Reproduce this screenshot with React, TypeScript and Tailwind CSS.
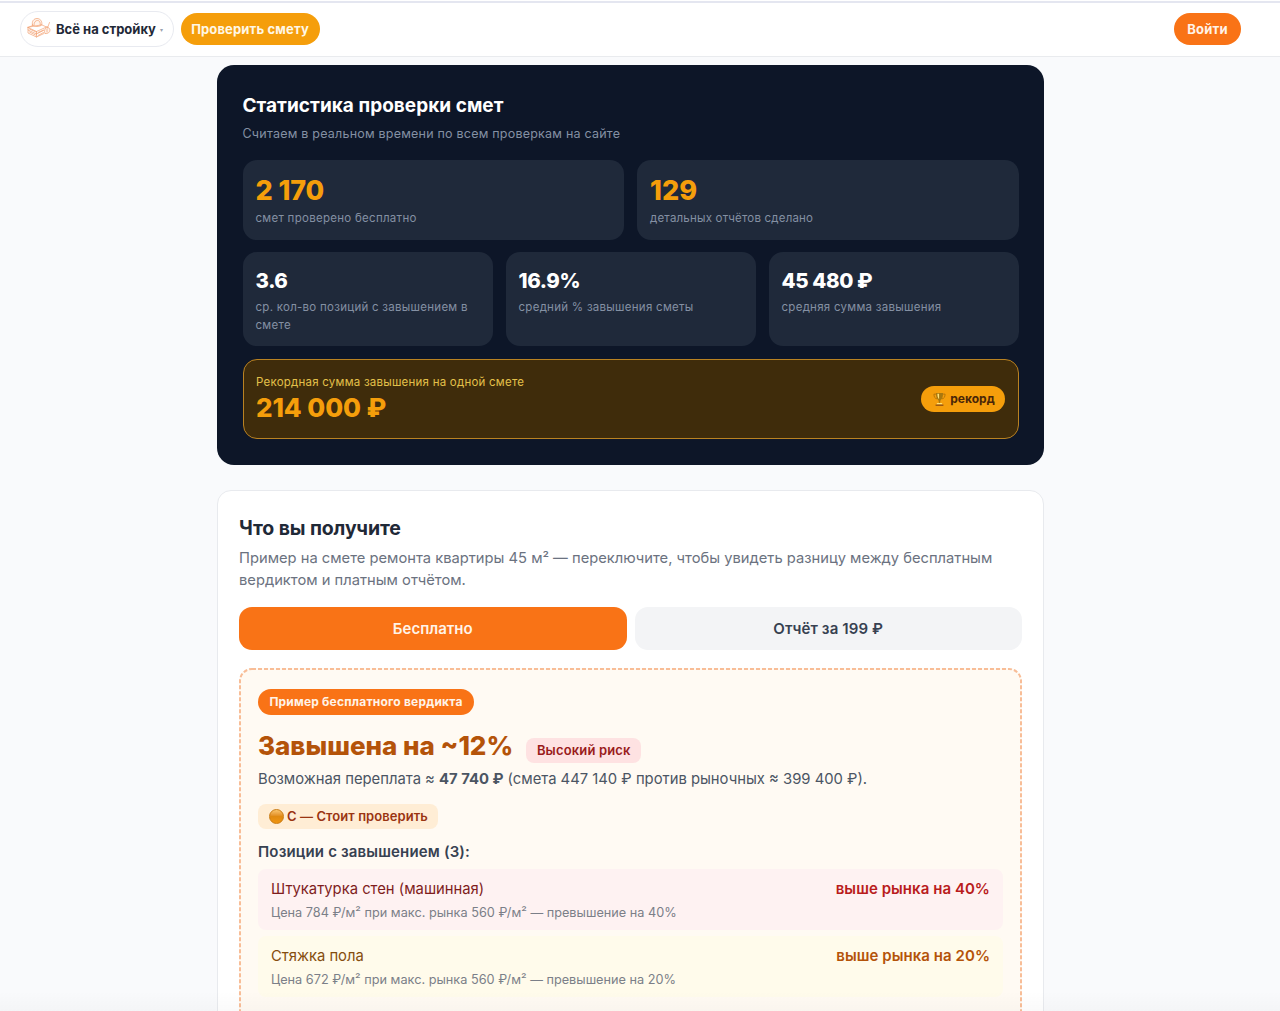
import React from "react";

type Tone = "red" | "amber";

const positions: { name: string; detail: string; excess: string; tone: Tone }[] = [
  {
    name: "Штукатурка стен (машинная)",
    detail: "Цена 784 ₽/м² при макс. рынка 560 ₽/м² — превышение на 40%",
    excess: "выше рынка на 40%",
    tone: "red",
  },
  {
    name: "Стяжка пола",
    detail: "Цена 672 ₽/м² при макс. рынка 560 ₽/м² — превышение на 20%",
    excess: "выше рынка на 20%",
    tone: "amber",
  },
];

const averages = [
  { value: "3.6", label: "ср. кол-во позиций с завышением в смете" },
  { value: "16.9%", label: "средний % завышения сметы" },
  { value: "45 480 ₽", label: "средняя сумма завышения" },
];

// hard hat on a stack of boards with a trowel leaning on the right
const LogoIcon = () => (
  <svg
    viewBox="0 0 48 40"
    className="mb-[2px] h-5 w-6 shrink-0"
    fill="none"
    stroke="#f19a69"
    strokeWidth="1.300"
    strokeLinecap="round"
    strokeLinejoin="round"
  >
    <path d="M11 14C9 6 14 1 20 1s11 5 9.500 13c-5 4-14 4-18.500 0z" fill="#fff4ec" />
    <path d="M14 14c0-6 3-9 7-9s6 3 5.500 9" />
    <path d="M2 19l9-4M30 14l9 4-20 9L2 19z" />
    <path d="M2 19v5l17 8 14-7M19 27v5M2 24v6l17 8 15-7M19 32v6" />
    <path d="M5 22l13 6M5 28l12 6M22 29l11-5M22 35l11-6" />
    <path d="M45 9l-4 11M40 18c-5 3-6 8-4 13 5 1 10-2 10-7 0-3-3-5-6-6z" fill="#fff4ec" />
    <path d="M40 22v6" />
  </svg>
);

const TrophyIcon = () => (
  <svg viewBox="0 0 14 16" className="h-[15px] w-[13px] shrink-0">
    <path
      d="M3.500 2.200H1c0 3 1 4.800 3.500 5.200M10.500 2.200H13c0 3-1 4.800-3.500 5.200"
      fill="none"
      stroke="#a66a08"
      strokeWidth="0.8"
    />
    <path d="M3.200 1h7.600c0 4.500-.8 6.500-2.600 7.600L7.500 12h-1l-.7-3.400C4 7.500 3.200 5.500 3.200 1z" fill="#a8780f" />
    <path d="M4.700 1.800h1.800v5.700C5.200 6.500 4.800 4.500 4.700 1.800z" fill="#ffe27a" />
    <path d="M4.500 11.800h5l.9 1.600H3.600z" fill="#ffe27a" />
    <path d="M2.800 13.400h8.400v1.400H2.800z" fill="#8a4b12" />
  </svg>
);

const Header = () => {
  return (
    <header className="flex h-[57px] flex-col border-b border-[#e9ebee] bg-white pt-px">
      <div className="h-[2px] bg-[#e4e6f0]" />
      <div className="flex h-[52px] items-center justify-between pl-5 pr-[39px]">
        <div className="flex items-center gap-[6.500px]">
          <div className="flex h-9 w-[154px] items-center rounded-full border border-[#e8eaf0] pl-[6px]">
            <LogoIcon />
            <span className="ml-[5px] whitespace-nowrap pt-px text-[13px] font-bold text-[#1f2937]">
              Всё на стройку
            </span>
            <span className="ml-1 text-[6px] text-gray-400">▾</span>
          </div>
          <button className="h-8 w-[139px] whitespace-nowrap rounded-full bg-[#f59e0b] pt-px text-[13px] font-bold tracking-[0.15px] text-[#fff7e6]">
            Проверить смету
          </button>
        </div>
        <button className="h-8 w-[67px] rounded-full bg-[#f97316] pt-px text-[13px] font-bold tracking-[0.2px] text-[#fff3e8]">
          Войти
        </button>
      </div>
    </header>
  );
};

const Stats = () => {
  return (
    <section className="h-[399.500px] rounded-[17px] bg-[#0d1628] px-[25.500px] pt-[26px]">
      <h2 className="text-[19px] font-bold leading-[29px] tracking-[0.03px] text-white">
        Статистика проверки смет
      </h2>
      <p className="mt-1 text-[12.500px] leading-5 tracking-[0.22px] text-[#8490a3]">
        Считаем в реальном времени по всем проверкам на сайте
      </p>

      <div className="mt-[15.500px] grid grid-cols-2 gap-[13px]">
        <div className="h-20 rounded-[14px] bg-[#1f293a] px-[13px] pt-[14px]">
          <div className="text-[27px] font-extrabold leading-[34px] tracking-[-0.1px] text-[#f59e0b]">
            2 170
          </div>
          <div className="mt-[1px] text-[11.500px] leading-[18px] tracking-[0.28px] text-[#8490a3]">
            смет проверено бесплатно
          </div>
        </div>
        <div className="h-20 rounded-[14px] bg-[#1f293a] px-[13px] pt-[14px]">
          <div className="text-[27px] font-extrabold leading-[34px] text-[#f59e0b]">129</div>
          <div className="mt-[1px] text-[11.500px] leading-[18px] tracking-[0.2px] text-[#8490a3]">
            детальных отчётов сделано
          </div>
        </div>
      </div>

      <div className="mt-[12.500px] grid grid-cols-3 gap-[13px]">
        {averages.map((item) => (
          <div key={item.value} className="h-[94px] rounded-[14px] bg-[#1f293a] px-[13px] pt-[13px]">
            <div className="text-[20.500px] font-extrabold leading-8 tracking-[-0.4px] text-white">
              {item.value}
            </div>
            <div className="mt-[0.500px] text-[11.500px] leading-[18px] tracking-[0.27px] text-[#8490a3]">
              {item.label}
            </div>
          </div>
        ))}
      </div>

      <div className="mt-[13px] flex h-20 items-center justify-between rounded-[14px] border border-[#b98222] bg-[#3f2c0b] px-[12.500px]">
        <div>
          <div className="text-[11.500px] leading-[18px] tracking-[0.23px] text-[#e3c04a]">
            Рекордная сумма завышения на одной смете
          </div>
          <div className="text-[26px] font-extrabold leading-[34px] tracking-[-0.1px] text-[#f59e0b]">
            214 000 ₽
          </div>
        </div>
        <div className="flex h-[26px] w-[84px] items-center justify-center gap-1 rounded-full bg-[#f59e0b] pl-[2px] text-xs font-bold text-[#4a2608]">
          <TrophyIcon />
          рекорд
        </div>
      </div>
    </section>
  );
};

const PositionRow = ({ name, detail, excess, tone }: (typeof positions)[number]) => {
  const red = tone === "red";
  return (
    <div className={`h-[61px] rounded-lg px-[13px] pt-2 ${red ? "bg-[#fef2f2]" : "bg-[#fffbeb]"}`}>
      <div className="flex items-center justify-between leading-6">
        <span className={`text-[14.800px] ${red ? "text-[#7f1d1d]" : "text-[#854d0e]"}`}>{name}</span>
        <span
          className={`text-[15px] font-semibold tracking-[0.05px] ${red ? "text-[#b91c1c]" : "text-[#b45309]"}`}
        >
          {excess}
        </span>
      </div>
      <div className="mt-[2px] text-[12.730px] leading-5 text-[#7b7f88]">{detail}</div>
    </div>
  );
};

const Offer = () => {
  return (
    <section className="mt-[25.500px] h-[560px] rounded-[14px] border border-[#e8eaee] bg-white px-[21px] pt-[22px]">
      <h2 className="text-[19.500px] font-bold leading-[30px] tracking-[-0.12px] text-[#1f2937]">
        Что вы получите
      </h2>
      <p className="mt-[5px] text-[14.720px] leading-[21.500px] text-[#6b7280]">
        Пример на смете ремонта квартиры 45 м² — переключите, чтобы увидеть разницу между бесплатным
        вердиктом и платным отчётом.
      </p>

      <div className="mt-4 grid grid-cols-2 gap-2">
        <button className="h-[43px] rounded-[13px] bg-[#f97316] pt-px text-[15px] font-semibold text-[#fff3e8]">
          Бесплатно
        </button>
        <button className="h-[43px] rounded-[13px] bg-[#f3f4f6] pt-px text-[15px] font-semibold tracking-[0.12px] text-[#374151]">
          Отчёт за 199 ₽
        </button>
      </div>

      <div className="relative mt-[18px] h-[400px] rounded-[13px] bg-[#fffaf3] px-[19px] pt-[21px]">
        {/* short dashes, finer than the native dashed border */}
        <svg className="pointer-events-none absolute inset-0 h-full w-full">
          <rect
            x="1"
            y="1"
            width="781"
            height="398"
            rx="12"
            fill="none"
            stroke="#f8bd97"
            strokeWidth="2"
            strokeDasharray="4 2"
          />
        </svg>
        <div className="flex h-[26px] w-[216px] items-center justify-center whitespace-nowrap rounded-full bg-[#f97316] text-xs font-bold tracking-[0.2px] text-[#fff3e8]">
          Пример бесплатного вердикта
        </div>
        <div className="mt-[14px] flex h-[39px] items-start gap-[13px]">
          <span className="text-[26px] font-extrabold leading-[34px] text-[#b45309]">Завышена на ~12%</span>
          <span className="mt-[9px] flex h-[25px] w-[115px] items-center justify-center rounded-lg bg-[#fee2e2] text-[13px] font-semibold tracking-[0.15px] text-[#991b1b]">
            Высокий риск
          </span>
        </div>
        <p className="text-[14.800px] leading-[22px] text-[#4b5563]">
          Возможная переплата ≈ <b className="font-bold">47 740 ₽</b> (смета 447 140 ₽ против рыночных ≈
          399 400 ₽).
        </p>
        <div className="mt-[14px] flex h-[25px] w-[180px] items-center whitespace-nowrap rounded-lg bg-[#ffedd5] pl-[11px] text-[13px] font-semibold tracking-[0.07px] text-[#9a3412]">
          <span className="mr-[3px] h-[15px] w-[15px] rounded-full border border-[#c97a10] bg-gradient-to-b from-[#f9c469] via-[#e08a10] to-[#f09410]" />
          C — Стоит проверить
        </div>
        <h3 className="mt-[11px] text-[15px] font-semibold leading-6 tracking-[0.16px] text-[#374151]">
          Позиции с завышением (3):
        </h3>
        <div className="mt-[5px] space-y-[6px]">
          {positions.map((position) => (
            <PositionRow key={position.name} {...position} />
          ))}
        </div>
      </div>
    </section>
  );
};

export default function App() {
  return (
    <div className="relative h-[1011px] overflow-hidden bg-[#f9fafc] font-['Inter','Liberation_Sans',sans-serif]">
      <Header />
      <main className="ml-[217px] mt-2 w-[827px]">
        <Stats />
        <Offer />
      </main>
      <div className="pointer-events-none absolute inset-x-0 bottom-0 h-5 bg-gradient-to-b from-transparent to-black/2" />
    </div>
  );
}
